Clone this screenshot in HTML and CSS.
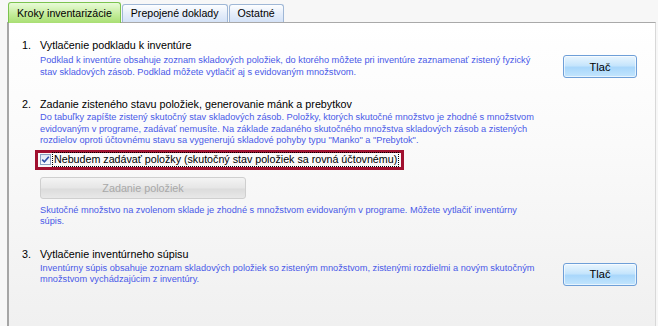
FILE: index.html
```html
<!DOCTYPE html>
<html lang="sk">
<head>
<meta charset="utf-8">
<link rel="stylesheet" href="styles.css">
</head>
<body>
<div class="tabs">
  <div class="tab tab-active">Kroky inventarizácie</div>
  <div class="tab">Prepojené doklady</div>
  <div class="tab">Ostatné</div>
</div>
<div class="panel">
  <div class="step step1">
    <div class="step-body">
      <div class="step-title"><span class="num">1.</span>Vytlačenie podkladu k inventúre</div>
      <div class="desc desc1">Podklad k inventúre obsahuje zoznam skladových položiek, do ktorého môžete pri inventúre zaznamenať zistený fyzický<br>stav skladových zásob. Podklad môžete vytlačiť aj s evidovaným množstvom.</div>
    </div>
    <button class="btn btn1">Tlač</button>
  </div>

  <div class="step step2">
    <div class="step-body">
      <div class="step-title"><span class="num">2.</span>Zadanie zisteného stavu položiek, generovanie mánk a prebytkov</div>
      <div class="desc">Do tabuľky zapíšte zistený skutočný stav skladových zásob. Položky, ktorých skutočné množstvo je zhodné s množstvom<br>evidovaným v programe, zadávať nemusíte. Na základe zadaného skutočného množstva skladových zásob a zistených<br>rozdielov oproti účtovnému stavu sa vygenerujú skladové pohyby typu "Manko" a "Prebytok".</div>
      <div class="check-wrap">
        <span class="checkbox"><svg width="9" height="9" viewBox="0 0 9 9"><path d="M1.2 4.6 L3.4 6.8 L7.8 1.8" fill="none" stroke="#2d4fa8" stroke-width="1.6"/></svg></span>
        <span class="check-label">Nebudem zadávať položky (skutočný stav položiek sa rovná účtovnému)</span>
      </div>
      <button class="btn-disabled">Zadanie položiek</button>
      <div class="desc desc-after">Skutočné množstvo na zvolenom sklade je zhodné s množstvom evidovaným v programe. Môžete vytlačiť inventúrny<br>súpis.</div>
    </div>
  </div>

  <div class="step step3">
    <div class="step-body">
      <div class="step-title"><span class="num">3.</span>Vytlačenie inventúrneho súpisu</div>
      <div class="desc">Inventúrny súpis obsahuje zoznam skladových položiek so zisteným množstvom, zistenými rozdielmi a novým skutočným<br>množstvom vychádzajúcim z inventúry.</div>
    </div>
    <button class="btn btn3">Tlač</button>
  </div>
</div>
</body>
</html>
```

FILE: styles.css
```css
html, body {
  margin: 0;
  padding: 0;
  width: 658px;
  height: 326px;
  overflow: hidden;
  background: #f7f7f7;
  font-family: "Liberation Sans", Arial, sans-serif;
}

.tabs {
  display: flex;
  align-items: flex-end;
  gap: 1px;
  height: 22px;
  padding-left: 8px;
}

.tab {
  height: 17px;
  padding: 0 8px;
  font-size: 10.6px;
  line-height: 17px;
  color: #000;
  border: 1px solid #9fb7d6;
  border-bottom: none;
  border-radius: 3px 3px 0 0;
  background: linear-gradient(#fdfeff, #e6eefa 50%, #d4e2f7);
}

.tab-active {
  height: 20px;
  line-height: 20px;
  padding: 0 8px;
  border-color: #7cc34f;
  background: linear-gradient(#e9fbd8, #c4ec9c 55%, #a9df73);
  margin-bottom: -1px;
  position: relative;
}

.panel {
  margin-left: 7px;
  margin-right: 2px;
  height: 304px;
  box-sizing: border-box;
  border-top: 1px solid #a9a9a9;
  border-left: 2px solid #a6a6a6;
  border-right: 1px solid #d8d8d8;
  background: linear-gradient(#ffffff, #fafafa 40%, #f0f0f0);
  padding: 15px 0 0 13px;
}

.step {
  display: flex;
  align-items: flex-start;
}

.step-body {
  flex: 1;
}

.step-title {
  font-size: 10.75px;
  line-height: 14px;
  color: #000;
  display: flex;
}

.num {
  width: 18px;
}

.desc {
  margin-left: 18px;
  font-size: 9.22px;
  line-height: 11.5px;
  color: #4a5ae8;
  margin-top: 1px;
}

.desc1 { margin-top: 3px; }

.btn {
  width: 74px;
  height: 23px;
  margin-right: 18px;
  border: 1px solid #6e9fd8;
  border-radius: 3px;
  background: linear-gradient(#eaf6fe, #c6e5fc 45%, #a9d7fb 55%, #c3e5fd);
  font-family: "Liberation Sans", Arial, sans-serif;
  font-size: 11px;
  color: #000;
  padding: 0;
  box-shadow: inset 0 0 0 1px rgba(255,255,255,0.6);
}

.btn1 { margin-top: 17px; }

.step2 { margin-top: 19px; }

.check-wrap {
  display: flex;
  align-items: center;
  gap: 2px;
  box-sizing: border-box;
  width: 369px;
  height: 20px;
  margin: 3px 0 0 13px;
  padding: 0 0 0 2px;
  border: 3px solid #a0102f;
  white-space: nowrap;
}

.checkbox {
  flex: none;
  width: 11px;
  height: 11px;
  box-sizing: border-box;
  border: 1px solid #8aa0c0;
  background: linear-gradient(#dfe7f3, #f8fbff);
  display: flex;
  align-items: center;
  justify-content: center;
}

.check-label {
  font-size: 10.7px;
  line-height: 13px;
  outline: 1px dotted #000;
  outline-offset: 0;
  padding: 0 1px;
  white-space: nowrap;
}

.btn-disabled {
  display: block;
  width: 206px;
  height: 22px;
  margin: 7px 0 0 18px;
  border: 1px solid #cfcfcf;
  border-radius: 3px;
  background: linear-gradient(#f4f4f4, #e6e6e6 50%, #dcdcdc 55%, #e8e8e8);
  color: #a8a8a8;
  font-family: "Liberation Sans", Arial, sans-serif;
  font-size: 10.75px;
  padding: 0;
}

.desc-after { margin-top: 6px; }

.step3 { margin-top: 19px; }
.step3 .desc { margin-top: 2px; }
.btn3 { margin-top: 16px; }
```
